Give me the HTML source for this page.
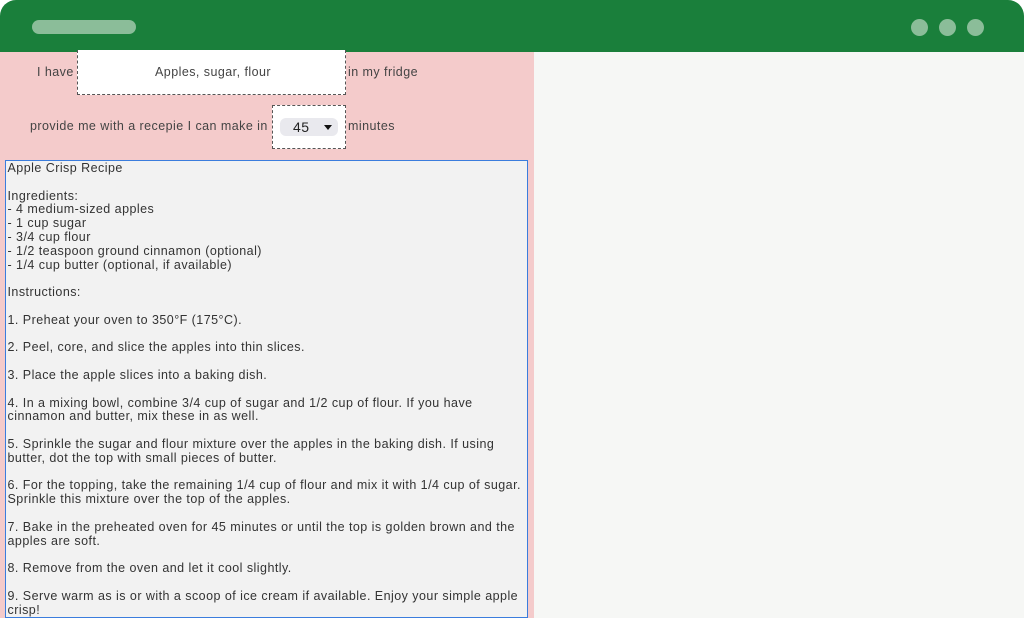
<!DOCTYPE html>
<html><head><meta charset="utf-8"><style>
*{margin:0;padding:0;box-sizing:border-box}
body{width:1024px;height:618px;overflow:hidden;background:#fff;font-family:"Liberation Sans",sans-serif;color:#333}
.win{position:absolute;left:0;top:0;width:1024px;height:618px;background:#f6f7f5;border-radius:16px 16px 0 0;overflow:hidden}
.hdr{position:absolute;left:0;top:0;width:1024px;height:52px;background:#1a7f3b}
.bar{position:absolute;left:32px;top:20px;width:104px;height:14px;border-radius:7px;background:#8bbd99}
.dot{position:absolute;top:19px;width:17px;height:17px;border-radius:50%;background:#8bbd99}
.pink{position:absolute;left:0;top:52px;width:534px;height:566px;background:#f4cbcb}
.t{position:absolute;font-size:12.5px;color:#444;white-space:nowrap;letter-spacing:0.45px}
.box{position:absolute;background:#fff;border:1px dashed #555}
.sel{position:absolute;left:280px;top:118px;width:58px;height:18px;border-radius:6px;background:#e9e9ee}
.ta{position:absolute;left:5px;top:160px;width:523px;height:458px;background:#f2f2f2;border:1.5px solid #3b7ddd}
.ta pre{position:absolute;left:1.5px;top:1px;font-family:"Liberation Sans",sans-serif;font-size:12.5px;letter-spacing:0.46px;line-height:13.8px;color:#333;white-space:pre}
</style></head><body>
<div class="win">
<div class="hdr"><div class="bar"></div><div class="dot" style="left:911px"></div><div class="dot" style="left:939px"></div><div class="dot" style="left:967px"></div></div>
<div class="pink"></div>
<div class="t" style="left:37px;top:65px">I have</div>
<div class="box" style="left:77px;top:50px;width:269px;height:45px;border-top:none"></div>
<div class="t" style="left:155px;top:65px">Apples, sugar, flour</div>
<div class="t" style="left:348px;top:65px">in my fridge</div>
<div class="t" style="left:30px;top:119px">provide me with a recepie I can make in</div>
<div class="box" style="left:272px;top:105px;width:74px;height:44px"></div>
<div class="sel"></div>
<div class="t" style="left:293px;top:119px;font-size:14px;color:#222">45</div>
<div style="position:absolute;left:324px;top:125px;width:0;height:0;border-left:4px solid transparent;border-right:4px solid transparent;border-top:5px solid #111"></div>
<div class="t" style="left:348px;top:119px">minutes</div>
<div class="ta"><pre>Apple Crisp Recipe

Ingredients:
- 4 medium-sized apples
- 1 cup sugar
- 3/4 cup flour
- 1/2 teaspoon ground cinnamon (optional)
- 1/4 cup butter (optional, if available)

Instructions:

1. Preheat your oven to 350°F (175°C).

2. Peel, core, and slice the apples into thin slices.

3. Place the apple slices into a baking dish.

4. In a mixing bowl, combine 3/4 cup of sugar and 1/2 cup of flour. If you have
cinnamon and butter, mix these in as well.

5. Sprinkle the sugar and flour mixture over the apples in the baking dish. If using
butter, dot the top with small pieces of butter.

6. For the topping, take the remaining 1/4 cup of flour and mix it with 1/4 cup of sugar.
Sprinkle this mixture over the top of the apples.

7. Bake in the preheated oven for 45 minutes or until the top is golden brown and the
apples are soft.

8. Remove from the oven and let it cool slightly.

9. Serve warm as is or with a scoop of ice cream if available. Enjoy your simple apple
crisp!</pre></div>
</div>
</body></html>
